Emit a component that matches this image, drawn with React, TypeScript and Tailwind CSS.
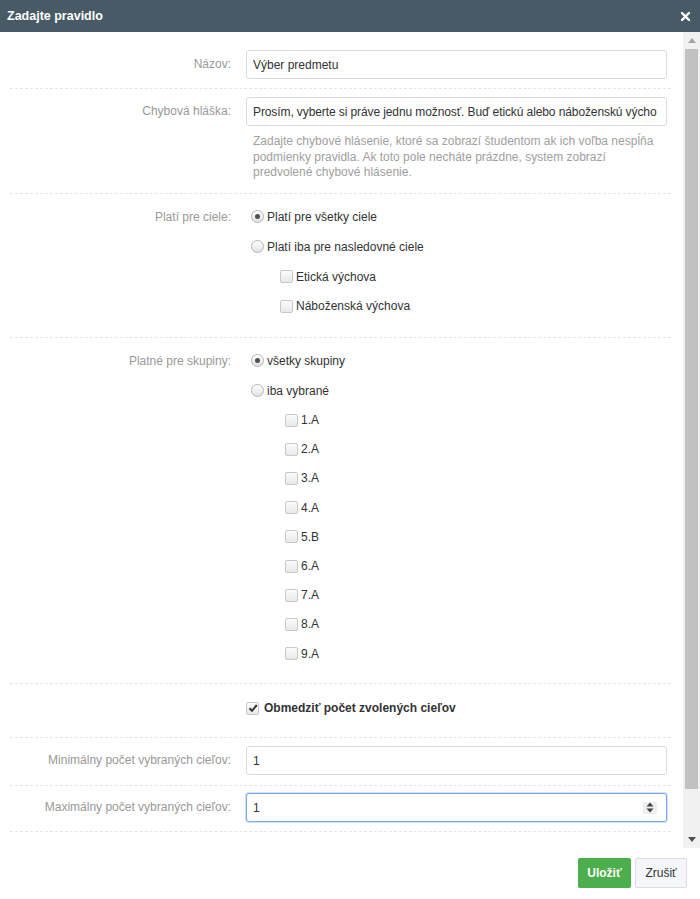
import React from "react";

const font = { fontFamily: '"Liberation Sans", Arial, sans-serif' };

function Radio({ checked }: { checked?: boolean }) {
  return (
    <span className="w-[13px] h-[13px] rounded-full border border-[#b5b5b5] bg-gradient-to-b from-[#ffffff] to-[#e2e2e2] flex items-center justify-center shrink-0">
      {checked && <span className="w-[5px] h-[5px] rounded-full bg-[#505050]" />}
    </span>
  );
}

function Check({ checked }: { checked?: boolean }) {
  return (
    <span className="w-[13px] h-[13px] rounded-[2px] border border-[#c8c8c8] bg-gradient-to-b from-[#fbfbfb] to-[#e9e9e9] flex items-center justify-center shrink-0">
      {checked && (
        <svg width="10" height="10" viewBox="0 0 10 10">
          <path d="M1.5 5.2 L4 7.8 L8.8 2" fill="none" stroke="#333" strokeWidth="2" />
        </svg>
      )}
    </span>
  );
}

function Row({ label, children, className }: { label?: string; children: React.ReactNode; className: string }) {
  return (
    <div className={"flex border-b border-dashed border-[#e6e6e6] " + className}>
      <div className="w-[221px] shrink-0 text-right text-[12px] text-[#999] leading-[29px]">{label}</div>
      <div className="ml-[15px] w-[421px]">{children}</div>
    </div>
  );
}

function Input({ value, focus, tight }: { value: string; focus?: boolean; tight?: boolean }) {
  return (
    <div
      className={
        "h-[29px] rounded-[3px] border flex items-center pl-[6px] text-[12px] text-[#333] bg-white " +
        (tight ? "pr-[3px] " : "pr-[9px] ") +
        (focus ? "border-[#7aa7ee] shadow-[0_0_0_1px_rgba(122,167,238,0.35)]" : "border-[#dcdcdc]")
      }
    >
      <span className={"flex-1 whitespace-nowrap overflow-hidden " + (tight ? "tracking-[-0.1px]" : "")}>{value}</span>
      {focus && (
        <span className="w-[14px] h-[12px] bg-[#eeeeee] flex items-center justify-center">
          <svg width="8" height="11" viewBox="0 0 8 11">
            <path d="M4 0.5 L7.5 4.5 H0.5 Z M4 10.5 L7.5 6.5 H0.5 Z" fill="#444" />
          </svg>
        </span>
      )}
    </div>
  );
}

function Opt({ kind, checked, label, indent, h, bold }: { kind: "r" | "c"; checked?: boolean; label: string; indent: string; h: string; bold?: boolean }) {
  return (
    <div className={"flex items-center " + indent + " " + h}>
      {kind === "r" ? <Radio checked={checked} /> : <Check checked={checked} />}
      <span className={"text-[12px] text-[#333] " + (bold ? "ml-[5px] font-bold text-[12.5px]" : kind === "r" ? "ml-[3px]" : "ml-[3px]")}>{label}</span>
    </div>
  );
}

export default function App() {
  const groups = ["1.A", "2.A", "3.A", "4.A", "5.B", "6.A", "7.A", "8.A", "9.A"];
  return (
    <div className="w-[700px] h-[899px] bg-white flex flex-col overflow-hidden" style={font}>
      <div className="h-[32px] bg-[#475a66] flex items-center justify-between pl-[7px] pr-[10px] shrink-0">
        <span className="text-white font-bold text-[12.5px]">Zadajte pravidlo</span>
        <svg width="9" height="9" viewBox="0 0 9 9">
          <path d="M1 1 L8 8 M8 1 L1 8" stroke="#fff" strokeWidth="2.4" strokeLinecap="square" />
        </svg>
      </div>
      <div className="h-[816px] flex shrink-0">
        <div className="w-[683px] pl-[10px] pr-[12px]">
          <Row label="Názov:" className="pt-[18px] pb-[9px]">
            <Input value="Výber predmetu" />
          </Row>
          <Row label="Chybová hláška:" className="pt-[8px] pb-[12px]">
            <Input tight value="Prosím, vyberte si práve jednu možnosť. Buď etickú alebo náboženskú výcho" />
            <p className="mt-[8px] ml-[7px] pr-[4px] text-[12px] leading-[15.5px] text-[#a0a0a0]">
              Zadajte chybové hlásenie, ktoré sa zobrazí študentom ak ich voľba nespĺňa podmienky pravidla. Ak toto pole necháte prázdne, system zobrazí predvolené chybové hlásenie.
            </p>
          </Row>
          <div className="flex border-b border-dashed border-[#e6e6e6] pt-[8px] pb-[16px]">
            <div className="w-[221px] shrink-0 text-right text-[12px] text-[#999] leading-[30px]">Platí pre ciele:</div>
            <div className="ml-[15px] w-[421px]">
              <Opt kind="r" checked label="Platí pre všetky ciele" indent="ml-[5px]" h="h-[30px]" />
              <Opt kind="r" label="Platí iba pre nasledovné ciele" indent="ml-[5px]" h="h-[30px]" />
              <Opt kind="c" label="Etická výchova" indent="ml-[34px]" h="h-[30px]" />
              <Opt kind="c" label="Náboženská výchova" indent="ml-[34px]" h="h-[29px]" />
            </div>
          </div>
          <div className="flex border-b border-dashed border-[#e6e6e6] pt-[8px] pb-[15px]">
            <div className="w-[221px] shrink-0 text-right text-[12px] text-[#999] leading-[30px]">Platné pre skupiny:</div>
            <div className="ml-[15px] w-[421px]">
              <Opt kind="r" checked label="všetky skupiny" indent="ml-[5px]" h="h-[30px]" />
              <Opt kind="r" label="iba vybrané" indent="ml-[5px]" h="h-[30px]" />
              {groups.map((g) => (
                <Opt key={g} kind="c" label={g} indent="ml-[39px]" h="h-[29.2px]" />
              ))}
            </div>
          </div>
          <div className="flex border-b border-dashed border-[#e6e6e6] pt-[9px] pb-[14px]">
            <div className="w-[221px] shrink-0" />
            <div className="ml-[15px] w-[421px]">
              <Opt kind="c" checked bold label="Obmedziť počet zvolených cieľov" indent="" h="h-[30px]" />
            </div>
          </div>
          <Row label="Minimálny počet vybraných cieľov:" className="pt-[8px] pb-[10px]">
            <Input value="1" />
          </Row>
          <Row label="Maximálny počet vybraných cieľov:" className="pt-[7px] pb-[9px]">
            <Input value="1" focus />
          </Row>
        </div>
        <div className="w-[17px] bg-[#f1f1f1] flex flex-col items-center">
          <div className="h-[17px] flex items-center justify-center">
            <svg width="8" height="5" viewBox="0 0 8 5"><path d="M4 0 L8 5 H0 Z" fill="#a3a3a3" /></svg>
          </div>
          <div className="w-[13px] h-[740px] bg-[#c1c1c1]" />
          <div className="flex-1" />
          <div className="h-[17px] flex items-center justify-center">
            <svg width="8" height="5" viewBox="0 0 8 5"><path d="M0 0 H8 L4 5 Z" fill="#505050" /></svg>
          </div>
        </div>
      </div>
      <div className="flex-1 flex justify-end items-start pt-[10px] pr-[13px] gap-[4px]">
        <button className="h-[30px] w-[53px] rounded-[2px] bg-[#4cae4c] text-white font-bold text-[12px]">Uložiť</button>
        <button className="h-[30px] w-[52px] rounded-[2px] bg-[#f5f6fa] border border-[#dddddd] text-[#333] text-[12px]">Zrušiť</button>
      </div>
    </div>
  );
}
